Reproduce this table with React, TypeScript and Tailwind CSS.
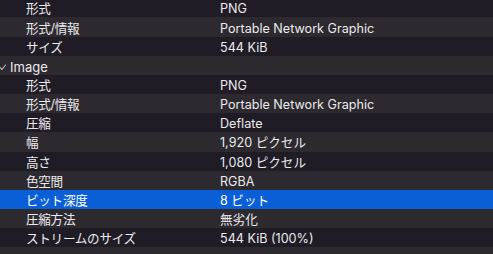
const rows: { label: string; value?: string; header?: boolean; selected?: boolean }[] = [
  { label: "形式", value: "PNG" },
  { label: "形式/情報", value: "Portable Network Graphic" },
  { label: "サイズ", value: "544 KiB" },
  { label: "Image", header: true },
  { label: "形式", value: "PNG" },
  { label: "形式/情報", value: "Portable Network Graphic" },
  { label: "圧縮", value: "Deflate" },
  { label: "幅", value: "1,920 ピクセル" },
  { label: "高さ", value: "1,080 ピクセル" },
  { label: "色空間", value: "RGBA" },
  { label: "ビット深度", value: "8 ビット", selected: true },
  { label: "圧縮方法", value: "無劣化" },
  { label: "ストリームのサイズ", value: "544 KiB (100%)" },
  { label: "" },
];

function Chevron() {
  return (
    <svg width="8" height="8" viewBox="0 0 8 8" className="shrink-0 -ml-[3px] mr-[4px]">
      <path d="M1 3.5 L4 6.5 L7.5 2" fill="none" stroke="#bdbbc0" strokeWidth="1.1" strokeLinecap="round" strokeLinejoin="round" />
    </svg>
  );
}

export default function App() {
  return (
    <div className="w-[493px] h-[254px] overflow-hidden bg-[#201c25] font-['Inter','Noto_Sans_CJK_JP',sans-serif] text-[12.6px] text-[#ebeaed]">
      <div className="-mt-[1.7px]">
        {rows.map((r, i) => {
          const bg = r.selected ? "bg-[#0b5fd6] text-white" : i % 2 === 1 ? "bg-[#2c292f]" : "bg-[#201c25]";
          return (
            <div key={i} className={`flex items-center h-[19.17px] pt-[3.5px] leading-none ${bg}`}>
              {r.header ? (
                <div className="flex items-center pl-[1px]">
                  <Chevron />
                  <span className="text-[13px]">{r.label}</span>
                </div>
              ) : (
                <>
                  <div className="w-[220px] shrink-0 pl-[26px] whitespace-nowrap tracking-[-0.3px]">{r.label}</div>
                  <div className="whitespace-nowrap">{r.value}</div>
                </>
              )}
            </div>
          );
        })}
      </div>
    </div>
  );
}
